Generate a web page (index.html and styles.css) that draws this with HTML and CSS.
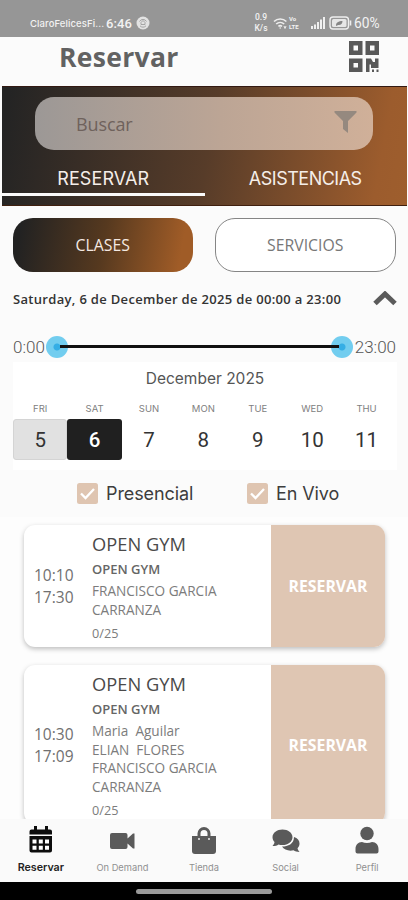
FILE: index.html
```html
<!DOCTYPE html>
<html lang="es">
<head>
    <meta charset="UTF-8">
    <meta name="viewport" content="width=device-width, initial-scale=1.0">
    <title>Reservar</title>
    <link rel="stylesheet" href="styles.css">
</head>
<body>
    <div class="status-bar">
        <span class="carrier">ClaroFelicesFi...</span>
        <span class="clock">6:46</span>
        <svg class="status-app" width="14" height="14" viewBox="0 0 14 14">
            <circle cx="7" cy="7" r="6.5" fill="#e2e2e2"/>
            <path d="M3.5 5.5a4 4 0 0 1 7 0M4 9.8a4 4 0 0 0 6 0M5 6.5l2-2 2 2v2H5z" fill="none" stroke="#a5a5a5"/>
        </svg>
        <span class="speed">0.9<br>K/s</span>
        <svg class="wifi" width="15" height="13" viewBox="0 0 15 13" fill="none" stroke="#eee" stroke-width="1.6">
            <path d="M1 4.5a9 9 0 0 1 12.4 0M3.2 7a6 6 0 0 1 8 0M5.4 9.3a3 3 0 0 1 3.6 0"/>
            <circle cx="7.2" cy="11" r=".8" fill="#eee" stroke="none"/>
            <path d="M11 9l1 2.5 1-2.5" stroke-width="1"/>
        </svg>
        <span class="volte">Vo<br>LTE</span>
        <svg class="signal" width="14" height="12" viewBox="0 0 14 12" fill="#f0f0f0">
            <path d="M0 9h2v3H0zM3 7.500h2V12H3zM6 5h2v7H6zM9 2.500h2V12H9zM12 0h2v12h-2z"/>
        </svg>
        <svg class="battery" width="23" height="14" viewBox="0 0 23 14">
            <rect x="1" y="1" width="18.500" height="12" rx="3" fill="none" stroke="#eee" stroke-width="1.4"/>
            <rect x="3" y="3" width="14.500" height="8" rx="1.500" fill="#e6e6e6"/>
            <path d="M7 9.500c0-3 2.500-4.500 6.500-4.500 0 3-2 4.500-4.500 4L7.500 10z" fill="#858585"/>
            <path d="M21.500 4.500v5" stroke="#eee" stroke-width="1.600"/>
        </svg>
        <span class="percent">60%</span>
    </div>

    <header class="header">
        <h1>Reservar</h1>
        <svg width="31" height="32" viewBox="0 0 31 32" fill="#595959">
            <path fill-rule="evenodd" d="M0 0h13.500v14H0zM4.500 4.500v5h4.500v-5zM16.500 0H30v14H16.500zM21 4.500v5h4.500v-5zM0 17.500h13.500V31H0zM4.500 22v4.500H9V22z"/>
            <path d="M17 17.500h5l2 3.500h2v-3.500h3.500V27h-7.500v-3.500h-1.500V31H17zM23 28.500h2V31h-2zM27.500 28.500h2V31h-2z"/>
        </svg>
    </header>

    <section class="banner">
        <div class="search">
            <span>Buscar</span>
            <svg width="23" height="22" viewBox="0 0 23 22">
                <path d="M.5 0h22v1.500L14 10v12l-5-4v-8L.5 1.500z" fill="#95897f"/>
            </svg>
        </div>
        <nav class="tabs">
            <a class="tab active"><span>RESERVAR</span></a>
            <a class="tab"><span class="asist">ASISTENCIAS</span></a>
        </nav>
    </section>

    <div class="types">
        <button class="type selected">CLASES</button>
        <button class="type">SERVICIOS</button>
    </div>

    <div class="date-row">
        <span>Saturday, 6 de December de 2025 de 00:00 a 23:00</span>
        <svg width="24" height="15" viewBox="0 0 24 15">
            <path d="M2 12.500L12 3l10 9.500" fill="none" stroke="#5b5b5b" stroke-width="5"/>
        </svg>
    </div>

    <div class="slider">
        <span>0:00</span>
        <div class="track">
            <i class="knob"></i>
            <i class="line"></i>
            <i class="knob"></i>
        </div>
        <span>23:00</span>
    </div>

    <section class="calendar">
        <h2>December 2025</h2>
        <div class="week">
            <div class="day"><small>FRI</small><b class="today">5</b></div>
            <div class="day"><small>SAT</small><b class="picked">6</b></div>
            <div class="day"><small>SUN</small><b>7</b></div>
            <div class="day"><small>MON</small><b>8</b></div>
            <div class="day"><small>TUE</small><b>9</b></div>
            <div class="day"><small>WED</small><b>10</b></div>
            <div class="day"><small>THU</small><b>11</b></div>
        </div>
    </section>

    <div class="filters">
        <div class="check presencial">
            <svg width="21" height="21" viewBox="0 0 21 21">
                <rect width="21" height="21" rx="2.500" fill="#dfc5b1"/>
                <path d="M4 10.500l4.500 4.500 8.500-9" fill="none" stroke="#fff" stroke-width="2.300"/>
            </svg>
            <span>Presencial</span>
        </div>
        <div class="check">
            <svg width="21" height="21" viewBox="0 0 21 21">
                <rect width="21" height="21" rx="2.500" fill="#dfc5b1"/>
                <path d="M4 10.500l4.500 4.500 8.500-9" fill="none" stroke="#fff" stroke-width="2.300"/>
            </svg>
            <span>En Vivo</span>
        </div>
    </div>

    <main class="list">
        <article class="card">
            <div class="hours">10:10<br>17:30</div>
            <div class="info">
                <h3>OPEN GYM</h3>
                <h4>OPEN GYM</h4>
                <p>FRANCISCO GARCIA<br>CARRANZA</p>
                <span class="places">0/25</span>
            </div>
            <button class="book">RESERVAR</button>
        </article>
        <article class="card">
            <div class="hours">10:30<br>17:09</div>
            <div class="info">
                <h3>OPEN GYM</h3>
                <h4>OPEN GYM</h4>
                <p>Maria&nbsp; Aguilar<br>ELIAN&nbsp; FLORES<br>FRANCISCO GARCIA<br>CARRANZA</p>
                <span class="places">0/25</span>
            </div>
            <button class="book">RESERVAR</button>
        </article>
    </main>

    <nav class="bottom-nav">
        <a class="item current">
            <svg width="26" height="28" viewBox="0 0 26 28">
                <path d="M6 0h3v3.500h8V0h3v3.500h2a2 2 0 0 1 2 2v3H1.500v-3a2 2 0 0 1 2-2H6zM1.500 10h22.500v14.500a2 2 0 0 1-2 2H3.500a2 2 0 0 1-2-2z" fill="#0d0d0d"/>
                <path d="M4.500 13.500h4v4h-4zM10.800 13.500h4v4h-4zM17 13.500h4v4h-4zM4.500 19.700h4v4h-4zM10.800 19.700h4v4h-4zM17 19.700h4v4h-4z" fill="#fff"/>
            </svg>
            <span>Reservar</span>
        </a>
        <a class="item">
            <svg width="26" height="28" viewBox="0 0 26 28" fill="#5a5a5a">
                <path d="M3 7h13.500a2 2 0 0 1 2 2v3.500l5.500-5h1.500v15H24l-5.500-5V21a2 2 0 0 1-2 2H3a2 2 0 0 1-2-2V9a2 2 0 0 1 2-2z"/>
            </svg>
            <span>On Demand</span>
        </a>
        <a class="item">
            <svg width="26" height="28" viewBox="0 0 26 28">
                <path d="M1 10h24v15a3 3 0 0 1-3 3H4a3 3 0 0 1-3-3z" fill="#5a5a5a"/>
                <path d="M8 13V7.500a5 5 0 0 1 10 0V13" fill="none" stroke="#5a5a5a" stroke-width="3"/>
                <circle cx="8" cy="13" r="1" fill="#eee"/>
                <circle cx="18" cy="13" r="1" fill="#eee"/>
            </svg>
            <span>Tienda</span>
        </a>
        <a class="item">
            <svg width="28" height="28" viewBox="0 0 28 28" fill="#5a5a5a">
                <path d="M22 11c3.500 1 5.500 3.500 5.500 6.500 0 2-.8 3.500-2 4.800.3 1.500 1 2.500 2 3.700-2.500 0-4.500-.7-6-1.700-4.500 1-9.500-.3-11.500-3.800C16 20.500 22 18 22 11z"/>
                <path d="M10.500 3.500c5.500 0 10 3.300 10 7.700s-4.500 7.800-10 7.800c-1.500 0-2.800-.2-4-.6-1.500 1-3.500 1.700-6 1.600 1-1.200 1.800-2.300 2-4C1.200 14.700.5 13 .5 11.200c0-4.400 4.500-7.700 10-7.700z"/>
            </svg>
            <span>Social</span>
        </a>
        <a class="item">
            <svg width="26" height="28" viewBox="0 0 26 28" fill="#5a5a5a">
                <circle cx="13" cy="7.500" r="6.700"/>
                <path d="M1.500 23c0-4 2.500-7 6.500-7 3 1.200 7 1.200 10 0 4 0 6.500 3 6.500 7v2.500a2 2 0 0 1-2 2h-19a2 2 0 0 1-2-2z"/>
            </svg>
            <span>Perfil</span>
        </a>
    </nav>
    <div class="system-bar"><i></i></div>
</body>
</html>
```

FILE: styles.css
```css
* {
    margin: 0;
    padding: 0;
    box-sizing: border-box;
}

body {
    display: flex;
    flex-direction: column;
    width: 408px;
    height: 900px;
    overflow: hidden;
    background-color: #fbfbfb;
    font-family: "Open Sans", sans-serif;
    color: #555;
}

svg {
    display: block;
    flex: none;
}

button {
    font-family: inherit;
    border: none;
}

/* status bar */
.status-bar {
    display: flex;
    align-items: center;
    flex: none;
    height: 37px;
    padding: 9px 0 0 30px;
    background-color: #969696;
    color: #f2f2f2;
    font-family: Roboto, sans-serif;
    white-space: nowrap;
}

.carrier {
    width: 76px;
    font-family: Inter, sans-serif;
    font-size: 9.5px;
    font-weight: 500;
    letter-spacing: 0.1px;
}

.clock {
    width: 31px;
    font-size: 13px;
    font-weight: 500;
    letter-spacing: 0.1px;
}

.speed {
    width: 20px;
    margin-left: 101px;
    font-size: 8.5px;
    font-weight: 500;
    line-height: 11px;
    text-align: center;
}

.status-app {
    margin-left: -1px;
}

.wifi {
    margin-left: 2px;
}

.volte {
    width: 14px;
    margin-left: 1px;
    font-size: 6px;
    font-weight: 700;
    line-height: 8px;
}

.signal {
    margin-left: 8px;
}

.battery {
    margin-left: 4px;
}

.percent {
    margin-left: 2px;
    font-size: 13.8px;
}

/* header */
.header {
    display: flex;
    justify-content: space-between;
    flex: none;
    height: 49px;
    padding: 4px 28px 0 59px;
}

.header h1 {
    font-size: 26.5px;
    font-weight: 700;
    line-height: 32px;
    letter-spacing: 0.3px;
    color: #626262;
}

.banner {
    flex: none;
    height: 120px;
    margin: 0 1px 0 2px;
    padding-top: 11px;
    background: linear-gradient(100deg, #242424 2%, #573c29 51%, #9c5c2d 92%, #9e5e2d);
    border-top: 1px solid #321912;
    border-bottom: 1px solid #40200f;
}

.search {
    display: flex;
    justify-content: space-between;
    align-items: center;
    height: 53px;
    margin: -1px 34px 0 33px;
    padding: 0 16px 0 41px;
    border-radius: 19px;
    background: linear-gradient(90deg, #9c9896, #bca595 55%, #d0b099);
    font-size: 18px;
    color: #6f625c;
}

.search span {
    letter-spacing: -0.1px;
}

.search svg {
    margin-top: -3px;
}

.tabs {
    display: flex;
    height: 46px;
}

.tab {
    width: 50%;
    padding-top: 15px;
    border-bottom: 3px solid transparent;
    font-family: Inter, sans-serif;
    font-size: 18px;
    line-height: 28px;
    text-align: center;
    color: #f5eee9;
}

.tab.active {
    border-color: #fafafa;
}

.tab span {
    letter-spacing: 0.1px;
}

.tab .asist {
    margin-left: -1px;
    letter-spacing: -0.5px;
}

/* classes / services */
.types {
    display: flex;
    gap: 22px;
    flex: none;
    padding: 12px 12px 0 13px;
}

.type {
    flex: 1;
    height: 54px;
    border: 1px solid #858585;
    border-radius: 20px;
    background-color: #fff;
    font-size: 15.8px;
    color: #777;
}

.type.selected {
    border: none;
    background: linear-gradient(100deg, #222 5%, #56391f 50%, #a05c27 92%);
    color: #f4e9e2;
}

.date-row {
    display: flex;
    justify-content: space-between;
    align-items: center;
    flex: none;
    height: 53px;
    padding: 0 11px 0 13px;
    font-size: 13px;
    font-weight: 600;
    letter-spacing: 0.32px;
    white-space: nowrap;
    color: #333;
}

.slider {
    display: flex;
    align-items: center;
    flex: none;
    height: 37px;
    margin: 3px 0 -3px;
    padding: 0 12px 0 13px;
    font-family: Roboto, sans-serif;
    font-size: 17px;
    font-weight: 300;
    color: #555;
}

.track {
    display: flex;
    align-items: center;
    flex: 1;
    margin: 0 2px 0 1px;
}

.line {
    flex: 1;
    height: 3px;
    margin: 0 -8px;
    background-color: #111;
    z-index: 1;
}

.knob {
    width: 22px;
    height: 22px;
    border-radius: 50%;
    background: radial-gradient(circle, #35aee5 0 3px, #72cdef 4px);
}

/* calendar */
.calendar {
    flex: none;
    height: 108px;
    margin: 0 11px 0 13px;
    background-color: #fff;
    font-family: Inter, sans-serif;
}

.calendar h2 {
    height: 39px;
    padding-top: 5px;
    font-size: 15.5px;
    font-weight: 400;
    line-height: 24px;
    text-align: center;
    color: #555;
}

.week {
    display: grid;
    grid-template-columns: repeat(7, 54.4px);
}

.day {
    text-align: center;
}

.day small {
    display: block;
    height: 18px;
    font-size: 9.5px;
    line-height: 15px;
    color: #808080;
}

.day b {
    display: block;
    height: 41px;
    border-radius: 3px;
    font-family: Roboto, sans-serif;
    font-size: 20.5px;
    font-weight: 400;
    line-height: 42px;
    color: #333;
}

.day .today {
    background-color: #e1e1e1;
    border: 1px solid #d4d4d4;
    line-height: 40px;
}

.day .picked {
    background-color: #202020;
    color: #fff;
    font-weight: 500;
}

.filters {
    display: flex;
    flex: none;
    height: 47px;
    padding-left: 77px;
    font-family: Inter, sans-serif;
    font-size: 18px;
    color: #3d3d3d;
}

.check {
    display: flex;
    align-items: center;
    gap: 8px;
}

.check span {
    margin-top: -1px;
    letter-spacing: -0.1px;
}

.presencial {
    width: 170px;
}

/* class cards */
.list {
    flex: 1;
    min-height: 0;
    padding: 8px 23px 0 24px;
    overflow: hidden;
    background-color: #fdfdfd;
}

.card {
    display: flex;
    align-items: stretch;
    margin-bottom: 18px;
    border-radius: 11px;
    background-color: #fff;
    box-shadow: 0 2px 5px rgba(0, 0, 0, 0.25);
    overflow: hidden;
}

.hours {
    width: 68px;
    padding-left: 10px;
    align-self: center;
    font-size: 15.5px;
    line-height: 22px;
    color: #707070;
}

.info {
    flex: 1;
    padding: 6px 0 3px;
    white-space: nowrap;
}

.info h3 {
    font-size: 18.3px;
    font-weight: 400;
    line-height: 25px;
    color: #4a4a4a;
}

.info h4 {
    padding-top: 1px;
    font-size: 13px;
    font-weight: 600;
    line-height: 24px;
    color: #666;
}

.info p {
    padding-top: 1px;
    font-size: 13.6px;
    line-height: 18.5px;
    color: #7c7c7c;
}

.places {
    display: block;
    height: 25px;
    font-size: 12.7px;
    line-height: 29px;
    color: #7c7c7c;
}

.book {
    width: 114px;
    background-color: #dfc6b3;
    color: #fff;
    font-size: 15.8px;
    font-weight: 700;
}

/* bottom navigation */
.bottom-nav {
    display: flex;
    justify-content: space-around;
    flex: none;
    height: 63px;
    padding-top: 7px;
    background-color: #fafafa;
}

.item {
    display: flex;
    flex-direction: column;
    align-items: center;
    flex: 1;
    gap: 6px;
    font-family: Inter, sans-serif;
    font-size: 9.3px;
    line-height: 15px;
    white-space: nowrap;
    color: #909090;
}

.current {
    font-size: 10.7px;
    font-weight: 600;
    color: #222;
}

.system-bar {
    display: flex;
    justify-content: center;
    align-items: center;
    flex: none;
    height: 18px;
    background-color: #000;
}

.system-bar i {
    width: 136px;
    height: 5px;
    border-radius: 3px;
    background-color: #999;
}
```
